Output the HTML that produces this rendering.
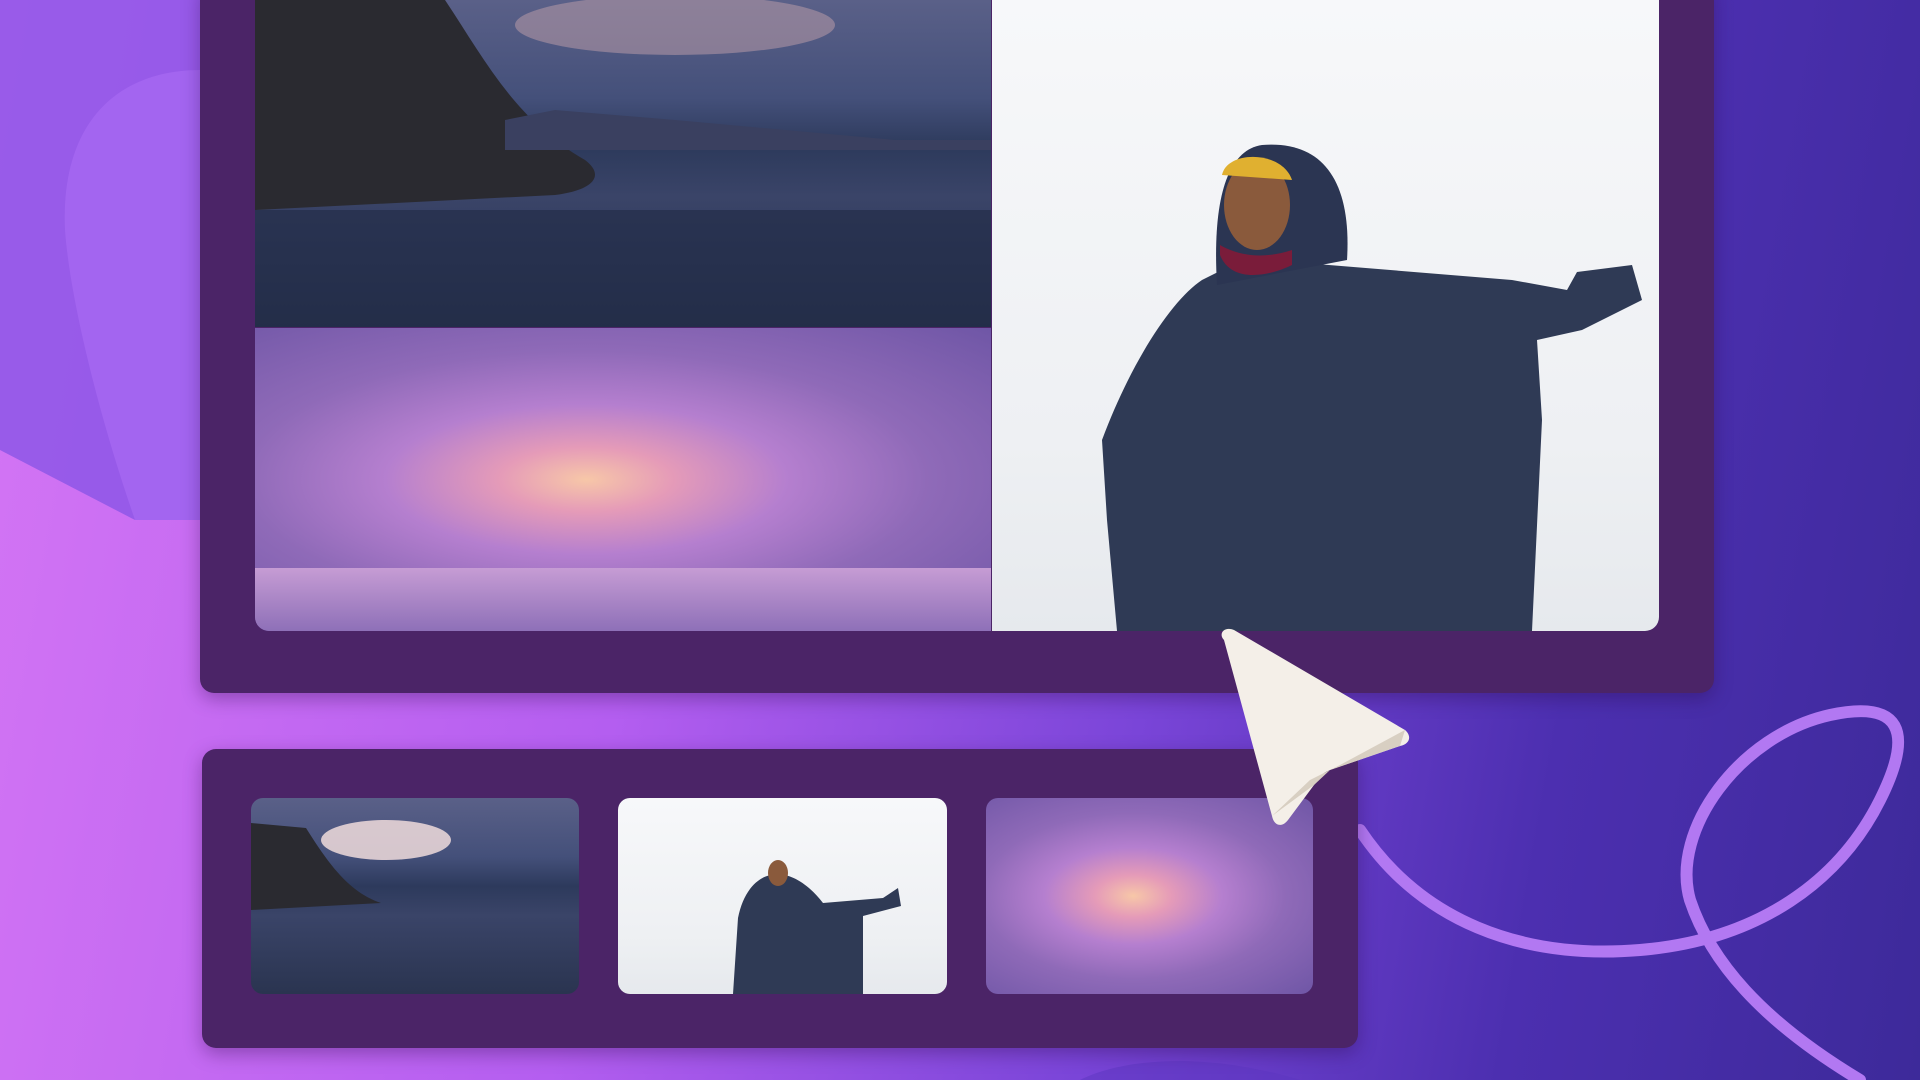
<!DOCTYPE html>
<html><head><meta charset="utf-8"><style>
*{margin:0;padding:0;box-sizing:border-box}
body{width:1920px;height:1080px;overflow:hidden;position:relative;font-family:"Liberation Sans",sans-serif;
background:linear-gradient(100deg,#d576f4 0%,#b45ef0 35%,#7a45d8 60%,#4c2fb0 80%,#3d2a9a 100%);}
.blob{position:absolute}
.panel{position:absolute;background:#4b2467;border-radius:14px;box-shadow:0 6px 18px rgba(40,10,70,.35)}
.img{position:absolute;overflow:hidden}
.sea{background:linear-gradient(180deg,#5a6088 0%,#44507a 30%,#2d3a5c 45%,#3a4468 60%,#2a3450 100%)}
.sunset{background:radial-gradient(ellipse at 45% 50%,#f7c7a8 0%,#e59bb8 15%,#b57fcf 35%,#8f6ab8 60%,#6f56a6 100%)}
.person{background:linear-gradient(180deg,#f7f8fa 0%,#eef0f3 70%,#e6e9ed 100%)}
</style></head><body>
<svg class="blob" style="left:0;top:0" width="1920" height="1080">
<path d="M0 0 L200 0 L200 520 L135 520 L0 450 Z" fill="#8a55e6" opacity=".8"/>
<path d="M135 520 C100 420 70 300 65 230 C60 120 120 70 200 70 L200 520 Z" fill="#a86af2" opacity=".7"/>
<path d="M1080 1080 C1120 1060 1200 1050 1300 1080 Z" fill="#5c36c0" opacity=".5"/>
<path d="M1360 830 C1420 920 1520 960 1640 950 C1760 940 1840 880 1880 800 C1915 730 1900 700 1830 715 C1740 735 1670 830 1690 900 C1710 960 1760 1020 1860 1080" fill="none" stroke="#b278f2" stroke-width="12" stroke-linecap="round"/>
</svg>
<div class="panel" style="left:200px;top:-20px;width:1514px;height:713px"></div>
<div class="img sea" style="left:255px;top:0;width:736px;height:327px">
<svg width="736" height="327"><ellipse cx="420" cy="25" rx="160" ry="30" fill="#b89aa8" opacity=".55"/><path d="M0 0 L190 0 C230 60 260 120 330 160 C350 175 340 190 300 195 L0 210 Z" fill="#2a2a30"/><path d="M250 120 L300 110 L420 120 L640 140 L736 140 L736 150 L250 150Z" fill="#3a4060"/><rect x="0" y="210" width="736" height="117" fill="#1f2a44" opacity=".6"/></svg></div>
<div class="img sunset" style="left:255px;top:328px;width:736px;height:303px;border-bottom-left-radius:14px">
<div style="position:absolute;left:0;top:240px;width:736px;height:63px;background:linear-gradient(180deg,#c69cd4,#8e70b8)"></div></div>
<div class="img person" style="left:992px;top:0;width:667px;height:631px;border-bottom-right-radius:14px">
<svg width="667" height="631"><path d="M125 631 L115 520 L110 440 C140 360 180 300 210 280 L230 270 L300 262 L520 280 L575 290 L585 272 L640 265 L650 300 L590 330 L545 340 L550 420 L540 631 Z" fill="#2f3a55"/><path d="M225 285 C220 200 235 150 270 145 C330 140 360 180 355 260 Z" fill="#2b3552"/><ellipse cx="265" cy="205" rx="33" ry="45" fill="#8a5a3c"/><path d="M230 175 C235 150 290 150 300 180 Z" fill="#e0b030"/><path d="M228 255 C240 285 280 275 300 265 L300 250 C270 260 245 255 228 245Z" fill="#7a1c3a"/></svg></div>
<div class="panel" style="left:202px;top:749px;width:1156px;height:299px"></div>
<div class="img sea" style="left:251px;top:798px;width:328px;height:196px;border-radius:12px"><svg width="328" height="196"><path d="M0 25 L55 30 C80 70 100 95 130 105 L0 112Z" fill="#2a2a30"/><ellipse cx="135" cy="42" rx="65" ry="20" fill="#f0dcdc" opacity=".85"/></svg></div>
<div class="img person" style="left:618px;top:798px;width:329px;height:196px;border-radius:12px"><svg width="329" height="196"><path d="M115 196 L120 120 C130 70 170 60 205 105 L265 100 L280 90 L283 108 L245 118 L245 196Z" fill="#2f3a55"/><ellipse cx="160" cy="75" rx="10" ry="13" fill="#8a5a3c"/></svg></div>
<div class="img sunset" style="left:986px;top:798px;width:327px;height:196px;border-radius:12px"></div>
<svg class="blob" style="left:1210px;top:620px" width="210" height="210"><path d="M14 20 C8 14 14 6 24 10 L195 110 C202 116 200 124 190 126 L120 150 C112 153 108 158 104 165 L78 200 C72 208 64 206 62 196 Z" fill="#f4efe8"/><path d="M62 196 L104 165 L120 150 L190 126 L195 110 L130 145 L100 160Z" fill="#d8cfc2"/></svg>
</body></html>
